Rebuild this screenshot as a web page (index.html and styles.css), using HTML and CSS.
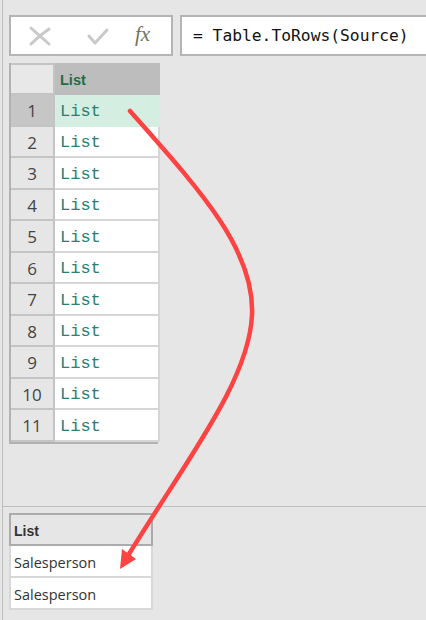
FILE: index.html
```html
<!DOCTYPE html>
<html lang="en">

<head>
    <meta charset="UTF-8">
    <title>Table.ToRows</title>
    <meta name="viewport" content="width=device-width, initial-scale=1.0">
    <link rel="stylesheet" href="styles.css">
</head>

<body>
    <div class="app">
        <div class="formula-bar">
            <div class="fb-buttons">
                <svg class="fb-icon" width="24" height="22" viewBox="0 0 24 22">
                    <path d="M3 3 Q12 11 21 19 M3 19 Q12 10 21 4" fill="none" stroke="#c9c9c9" stroke-width="3" stroke-linecap="round" />
                </svg>
                <svg class="fb-icon" width="24" height="22" viewBox="0 0 24 22">
                    <path d="M3 11 L9 18 L21 5" fill="none" stroke="#c9c9c9" stroke-width="3" stroke-linecap="round" stroke-linejoin="round" />
                </svg>
                <span class="fx">fx</span>
            </div>
            <div class="fb-input">= Table.ToRows(Source)</div>
        </div>

        <div class="workspace">
            <div class="grid">
                <div class="cell corner"></div>
                <div class="cell col-head">List</div>

                <div class="cell num selected">1</div>
                <div class="cell val selected">List</div>
                <div class="cell num">2</div>
                <div class="cell val">List</div>
                <div class="cell num">3</div>
                <div class="cell val">List</div>
                <div class="cell num">4</div>
                <div class="cell val">List</div>
                <div class="cell num">5</div>
                <div class="cell val">List</div>
                <div class="cell num">6</div>
                <div class="cell val">List</div>
                <div class="cell num">7</div>
                <div class="cell val">List</div>
                <div class="cell num">8</div>
                <div class="cell val">List</div>
                <div class="cell num">9</div>
                <div class="cell val">List</div>
                <div class="cell num">10</div>
                <div class="cell val">List</div>
                <div class="cell num">11</div>
                <div class="cell val">List</div>
            </div>
        </div>

        <div class="preview">
            <div class="preview-table">
                <div class="p-head">List</div>
                <div class="p-row">Salesperson</div>
                <div class="p-row">Salesperson</div>
            </div>
        </div>

        <!-- annotation arrow drawn over the grid -->
        <svg class="arrow" width="426" height="620" viewBox="0 0 426 620">
            <path d="M130 111 C200 190 255 250 252 315 C249 380 190 455 129 554" fill="none" stroke="#ff4242" stroke-width="4.5" stroke-linecap="round" />
            <polygon points="120,569 136,559 122,549" fill="#ff4242" />
        </svg>
    </div>
</body>

</html>
```

FILE: styles.css
```css
* {
    margin: 0;
    padding: 0;
    box-sizing: border-box;
}

body {
    background: #e6e6e6;
    font-family: 'Liberation Sans', Arial, sans-serif;
    width: 426px;
    height: 620px;
    overflow: hidden;
}

.app {
    position: relative;
    height: 620px;
    margin-left: 2px;
    border-left: 1px solid #bdbdbd;
    padding-top: 15px;
}

/* formula bar */
.formula-bar {
    display: flex;
    gap: 7px;
    height: 41px;
    padding-left: 6px;
}

.fb-buttons {
    width: 164px;
    background: white;
    border: 2px solid #b4b4b4;
    display: flex;
    align-items: center;
    padding-left: 17px;
    gap: 34px;
}

.fb-icon {
    display: block;
}

.fx {
    font-family: 'Liberation Serif', serif;
    font-style: italic;
    font-size: 21px;
    color: #6e7465;
    margin-left: -9px;
    margin-top: -2px;
}

.fb-input {
    flex: 1;
    background: white;
    border: 2px solid #b4b4b4;
    border-right: none;
    display: flex;
    align-items: center;
    padding-left: 11px;
    font-family: 'DejaVu Sans Mono', monospace;
    font-size: 16.3px;
    color: #111;
    white-space: nowrap;
}

/* main grid */
.workspace {
    height: 451px;
    border-bottom: 1px solid #bdbdbd;
    padding: 7px 0 0 6px;
}

.grid {
    display: grid;
    grid-template-columns: 44px 105px;
    grid-template-rows: 32px repeat(11, 31.5px);
    width: 149px;
    border-left: 2px solid #b2b2b2;
    border-bottom: 2px solid #b2b2b2;
}

.cell {
    border-right: 2px solid #d6d6d6;
    border-bottom: 2px solid #d6d6d6;
    display: flex;
    align-items: center;
    padding-top: 3px;
}

.corner {
    background: #e8e8e8;
    border-color: #c4c4c4;
    border-top: 2px solid #c4c4c4;
}

.col-head {
    background: #bdbdbd;
    border-color: #bdbdbd;
    color: #1e6e45;
    font-weight: bold;
    font-size: 14.5px;
    padding-left: 5px;
    padding-top: 4px;
}

.num {
    background: #e6e6e6;
    border-color: #c4c4c4;
    justify-content: center;
    font-family: 'Open Sans', sans-serif;
    font-size: 17px;
    color: #444;
    padding-top: 2px;
}

.num.selected {
    background: #c6c6c6;
}

.val {
    background: white;
    padding-left: 5px;
    font-family: 'Liberation Mono', monospace;
    font-size: 17px;
    color: #2a8070;
}

.val.selected {
    background: #d4eee1;
    border-color: #d4eee1;
}

/* preview pane */
.preview {
    padding: 6px 0 0 6px;
}

.preview-table {
    width: 144px;
}

.p-head {
    height: 33px;
    border: 2px solid #ababab;
    display: flex;
    align-items: center;
    padding-left: 3px;
    padding-top: 2px;
    font-weight: bold;
    font-size: 14px;
    color: #333;
}

.p-row {
    height: 32px;
    background: white;
    border: 2px solid #d8d8d8;
    border-top: none;
    display: flex;
    align-items: center;
    padding-left: 3px;
    padding-top: 3px;
    font-family: 'Open Sans', sans-serif;
    font-size: 14.5px;
    color: #333;
}

.arrow {
    position: absolute;
    top: 0;
    left: -3px;
    pointer-events: none;
}
```
